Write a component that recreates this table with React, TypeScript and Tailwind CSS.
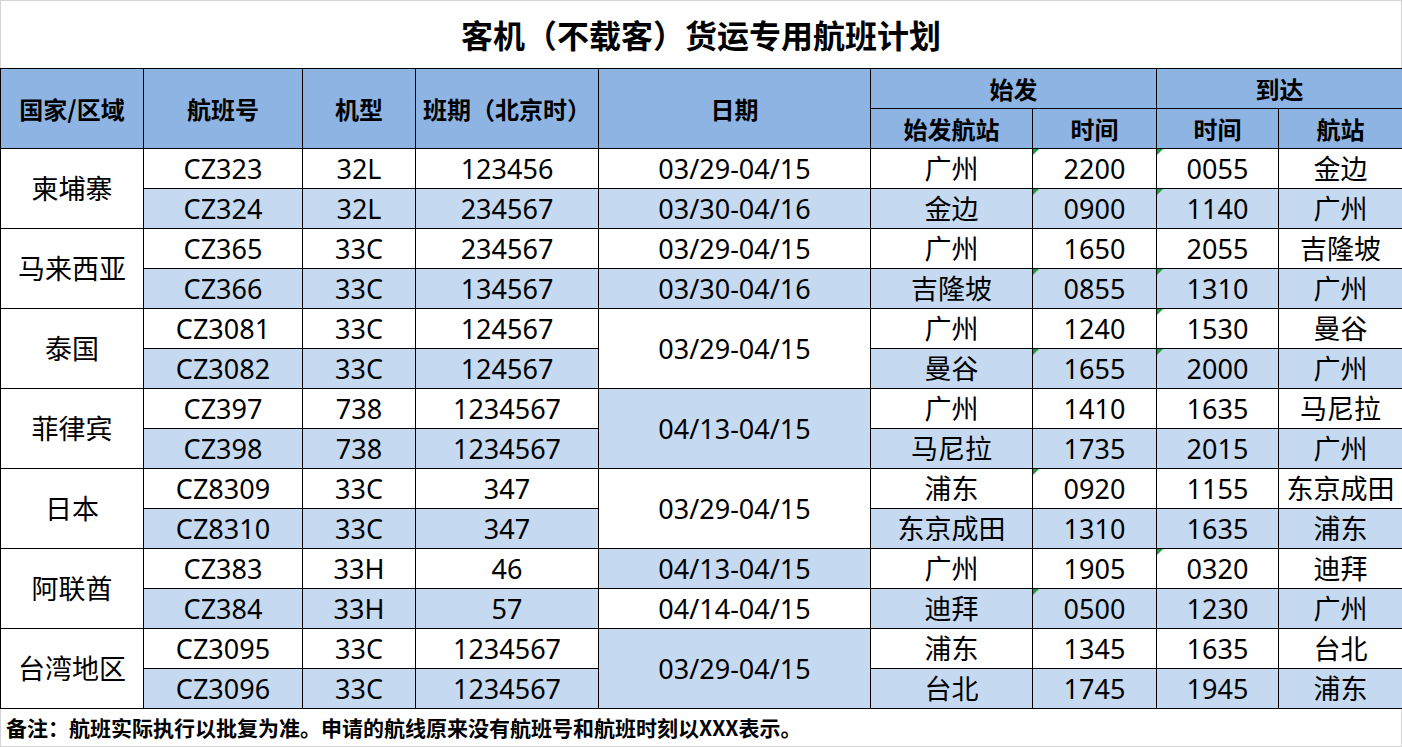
import React from 'react';

interface Flight {
  country?: string;
  no: string;
  type: string;
  days: string;
  date?: string;
  dateSpan?: number;
  dateLight?: boolean;
  from: string;
  depTime: string;
  arrTime: string;
  to: string;
  light: boolean;
  depMark?: boolean;
  arrMark?: boolean;
}

const flights: Flight[] = [
  { country: '柬埔寨', no: 'CZ323', type: '32L', days: '123456', date: '03/29-04/15', from: '广州', depTime: '2200', arrTime: '0055', to: '金边', light: false, depMark: true, arrMark: true },
  { no: 'CZ324', type: '32L', days: '234567', date: '03/30-04/16', dateLight: true, from: '金边', depTime: '0900', arrTime: '1140', to: '广州', light: true, depMark: true, arrMark: true },
  { country: '马来西亚', no: 'CZ365', type: '33C', days: '234567', date: '03/29-04/15', from: '广州', depTime: '1650', arrTime: '2055', to: '吉隆坡', light: false },
  { no: 'CZ366', type: '33C', days: '134567', date: '03/30-04/16', dateLight: true, from: '吉隆坡', depTime: '0855', arrTime: '1310', to: '广州', light: true, depMark: true, arrMark: true },
  { country: '泰国', no: 'CZ3081', type: '33C', days: '124567', date: '03/29-04/15', dateSpan: 2, from: '广州', depTime: '1240', arrTime: '1530', to: '曼谷', light: false, arrMark: true },
  { no: 'CZ3082', type: '33C', days: '124567', from: '曼谷', depTime: '1655', arrTime: '2000', to: '广州', light: true, depMark: true, arrMark: true },
  { country: '菲律宾', no: 'CZ397', type: '738', days: '1234567', date: '04/13-04/15', dateSpan: 2, dateLight: true, from: '广州', depTime: '1410', arrTime: '1635', to: '马尼拉', light: false },
  { no: 'CZ398', type: '738', days: '1234567', from: '马尼拉', depTime: '1735', arrTime: '2015', to: '广州', light: true },
  { country: '日本', no: 'CZ8309', type: '33C', days: '347', date: '03/29-04/15', dateSpan: 2, from: '浦东', depTime: '0920', arrTime: '1155', to: '东京成田', light: false, depMark: true },
  { no: 'CZ8310', type: '33C', days: '347', from: '东京成田', depTime: '1310', arrTime: '1635', to: '浦东', light: true },
  { country: '阿联酋', no: 'CZ383', type: '33H', days: '46', date: '04/13-04/15', dateLight: true, from: '广州', depTime: '1905', arrTime: '0320', to: '迪拜', light: false, arrMark: true },
  { no: 'CZ384', type: '33H', days: '57', date: '04/14-04/15', dateLight: false, from: '迪拜', depTime: '0500', arrTime: '1230', to: '广州', light: true, depMark: true },
  { country: '台湾地区', no: 'CZ3095', type: '33C', days: '1234567', date: '03/29-04/15', dateSpan: 2, dateLight: true, from: '浦东', depTime: '1345', arrTime: '1635', to: '台北', light: false },
  { no: 'CZ3096', type: '33C', days: '1234567', from: '台北', depTime: '1745', arrTime: '1945', to: '浦东', light: true },
];

const Mark = () => (
  <span className="absolute left-0 top-0 h-0 w-0 border-t-[6px] border-r-[6px] border-t-[#1f9d3a] border-r-transparent" />
);

const App: React.FC = () => {
  const cell = 'border border-black p-0 h-[40px] text-center align-middle';
  const head = `${cell} bg-[#8db4e2] font-bold text-[24px] font-['Noto_Sans_CJK_SC',sans-serif]`;

  return (
    <div className="w-[1402px] h-[747px] bg-white text-black font-['Noto_Sans_CJK_SC',sans-serif] overflow-hidden">
      <div className="h-[68px] border-t border-l border-r border-[#d4d4d4] flex items-center justify-center">
        <h1 className="text-[32px] font-bold leading-none pb-[2px]">客机（不载客）货运专用航班计划</h1>
      </div>

      <table className="w-[1402px] table-fixed border-collapse text-[27px] leading-none font-['Noto_Sans','Noto_Sans_CJK_SC',sans-serif]">
        <colgroup>
          <col className="w-[143px]" />
          <col className="w-[159px]" />
          <col className="w-[113px]" />
          <col className="w-[183px]" />
          <col className="w-[272px]" />
          <col className="w-[162px]" />
          <col className="w-[124px]" />
          <col className="w-[122px]" />
          <col className="w-[124px]" />
        </colgroup>
        <thead>
          <tr>
            <th rowSpan={2} className={head}>国家/区域</th>
            <th rowSpan={2} className={head}>航班号</th>
            <th rowSpan={2} className={head}>机型</th>
            <th rowSpan={2} className={head}>班期（北京时）</th>
            <th rowSpan={2} className={head}>日期</th>
            <th colSpan={2} className={head}>始发</th>
            <th colSpan={2} className={head}>到达</th>
          </tr>
          <tr>
            <th className={head}>始发航站</th>
            <th className={head}>时间</th>
            <th className={head}>时间</th>
            <th className={head}>航站</th>
          </tr>
        </thead>
        <tbody>
          {flights.map((f) => {
            const bg = f.light ? 'bg-[#c5d9f1]' : 'bg-white';
            return (
              <tr key={f.no}>
                {f.country && (
                  <td rowSpan={2} className={`${cell} bg-white`}>
                    {f.country}
                  </td>
                )}
                <td className={`${cell} ${bg}`}>{f.no}</td>
                <td className={`${cell} ${bg}`}>{f.type}</td>
                <td className={`${cell} ${bg}`}>{f.days}</td>
                {f.date && (
                  <td
                    rowSpan={f.dateSpan || 1}
                    className={`${cell} ${f.dateLight ? 'bg-[#c5d9f1]' : 'bg-white'}`}
                  >
                    {f.date}
                  </td>
                )}
                <td className={`${cell} ${bg}`}>{f.from}</td>
                <td className={`${cell} ${bg} relative`}>
                  {f.depMark && <Mark />}
                  {f.depTime}
                </td>
                <td className={`${cell} ${bg} relative`}>
                  {f.arrMark && <Mark />}
                  {f.arrTime}
                </td>
                <td className={`${cell} ${bg}`}>{f.to}</td>
              </tr>
            );
          })}
        </tbody>
      </table>

      <div className="h-[38px] border-b border-l border-r border-[#d4d4d4] flex items-center pl-[5px]">
        <p className="text-[21px] font-bold leading-none">
          备注：航班实际执行以批复为准。申请的航线原来没有航班号和航班时刻以XXX表示。
        </p>
      </div>
    </div>
  );
};

export default App;
